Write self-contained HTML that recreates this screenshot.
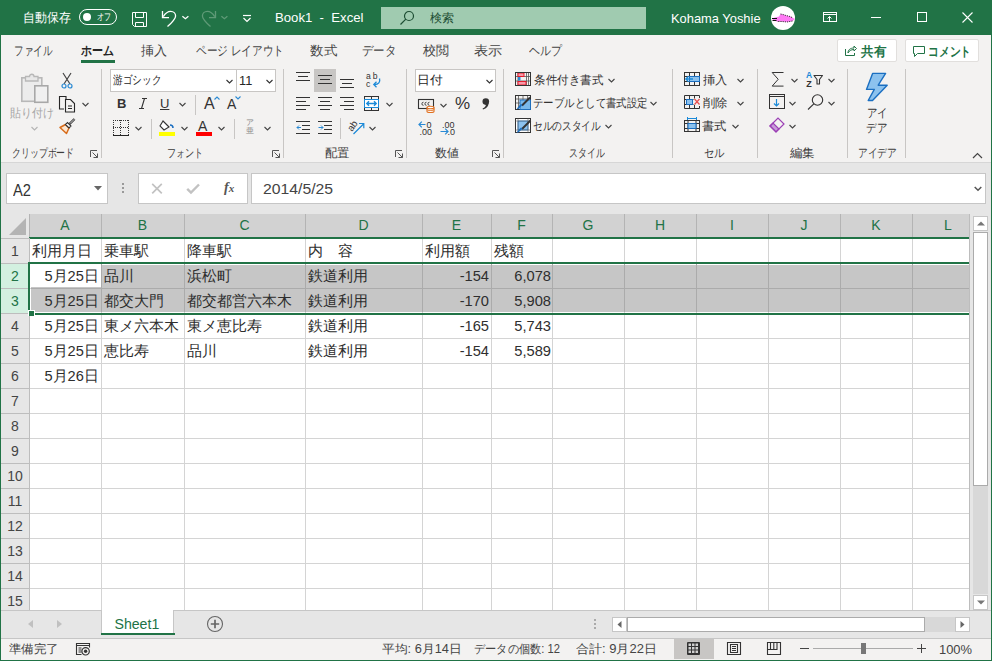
<!DOCTYPE html>
<html lang="ja"><head><meta charset="utf-8">
<style>
*{margin:0;padding:0;box-sizing:border-box}
html,body{width:992px;height:661px;overflow:hidden;background:#f3f2f1;font-family:"Liberation Sans",sans-serif;color:#262626}
.a{position:absolute}
.t{position:absolute;white-space:nowrap}
svg{overflow:visible}
</style></head><body>
<div class="a" style="left:0px;top:0px;width:992px;height:35px;background:#217346;"></div>
<div id="autosave" class="t" style="left:23.16px;top:10px;font-size:12.5px;line-height:16px;color:#fff;transform:scaleX(0.9192);transform-origin:0 0;">自動保存</div>
<div class="a" style="left:79px;top:9px;width:38px;height:16px;background:transparent;border:1px solid #fff;border-radius:8px;box-sizing:border-box"></div>
<div class="a" style="left:83px;top:13px;width:8px;height:8px;background:#fff;border-radius:50%"></div>
<div id="ofu" class="t" style="left:97.3px;top:11px;font-size:10px;line-height:12px;color:#fff;transform:scaleX(0.7075);transform-origin:0 0;">オフ</div>
<svg class="a" style="left:131px;top:11px" width="17" height="17" viewBox="0 0 17 17"><g fill="none" stroke="#fff" stroke-width="1"><path d="M1.5 1.5h14v14h-12l-2-2z"/><path d="M4.5 1.5v5h8v-5"/><path d="M4.5 15.5v-4h8v4"/></g></svg>
<svg class="a" style="left:160px;top:10px" width="18" height="18" viewBox="0 0 18 18"><g fill="none" stroke="#fff" stroke-width="1.3"><path d="M2.5 1V7.6H9"/><path d="M3.3 6.6C5.5 3 8.5 1.4 10.7 1.4 13.5 1.4 15.6 3.5 15.6 5.9 15.6 8.5 13 11.5 7.5 16.6"/></g></svg>
<svg class="a" style="left:181px;top:14px" width="9" height="6" viewBox="0 0 9 6"><path d="M1.4 2.3l3 2.4 3-2.4" fill="none" stroke="#fff" stroke-width="1.3"/></svg>
<svg class="a" style="left:200px;top:10px" width="18" height="18" viewBox="0 0 18 18"><g fill="none" stroke="#5f9a77" stroke-width="1.3"><path d="M15.5 1V7.6H9"/><path d="M14.7 6.6C12.5 3 9.5 1.4 7.3 1.4 4.5 1.4 2.4 3.5 2.4 5.9 2.4 8.5 5 11.5 10.5 16.6"/></g></svg>
<svg class="a" style="left:220px;top:14px" width="9" height="6" viewBox="0 0 9 6"><path d="M1.4 2.3l3 2.4 3-2.4" fill="none" stroke="#5f9a77" stroke-width="1.3"/></svg>
<svg class="a" style="left:242px;top:14px" width="10" height="9" viewBox="0 0 10 9"><g fill="none" stroke="#fff" stroke-width="1.2"><path d="M1 1.5h8"/><path d="M1.5 4l3.5 3.5L8.5 4"/></g></svg>
<div id="book" class="t" style="left:274.99px;top:10px;font-size:13px;line-height:16px;color:#fff;transform:scaleX(1.0116);transform-origin:0 0;">Book1&nbsp;&nbsp;-&nbsp;&nbsp;Excel</div>
<div class="a" style="left:381px;top:7px;width:265px;height:22px;background:#a0cbb0;"></div>
<svg class="a" style="left:399px;top:10px" width="16" height="16" viewBox="0 0 16 16"><g fill="none" stroke="#1d4e33" stroke-width="1.2"><circle cx="10" cy="6" r="4.5"/><path d="M6.8 9.2L1.5 14.5"/></g></svg>
<div id="kensaku" class="t" style="left:430.0px;top:11px;font-size:12px;line-height:15px;color:#1d4e33;transform:scaleX(1.001);transform-origin:0 0;">検索</div>
<div id="user" class="t" style="left:670.62px;top:11px;font-size:13px;line-height:16px;color:#fff;transform:scaleX(0.9911);transform-origin:0 0;">Kohama Yoshie</div>
<div class="a" style="left:771px;top:6px;width:24px;height:24px;background:#fff;border-radius:50%"></div>
<svg class="a" style="left:771px;top:12px" width="25" height="12" viewBox="0 0 25 12"><path d="M1.5 6.5L4 5.5 8 4.5 9.5 2 12 2.5 15 3.5 19 4.5 22 6 24 7 21.5 9 16 10 11 9.5 6 9.5 2 8.5z" fill="#ff7af5"/><path d="M9.5 2L12 2.5 15 3.5 19 4.5 22 6M21.5 9L16 10 11 9.5 6 9.5" fill="none" stroke="#222" stroke-width="0.9" stroke-dasharray="1.2 1"/><path d="M1 6.5h5M1.5 8.5h4" stroke="#111" stroke-width="1"/></svg>
<svg class="a" style="left:823px;top:12px" width="14" height="10" viewBox="0 0 14 10"><g fill="none" stroke="#fff" stroke-width="1"><rect x="0.5" y="0.5" width="13" height="9"/><path d="M0.5 2.5h13"/><path d="M6.5 9.5V4.5M4.5 6.5l2-2 2 2"/></g></svg>
<div class="a" style="left:871px;top:17px;width:10px;height:1px;background:#fff;"></div>
<div class="a" style="left:917px;top:12px;width:10px;height:10px;background:transparent;border:1px solid #fff"></div>
<svg class="a" style="left:962px;top:12px" width="11" height="11" viewBox="0 0 11 11"><path d="M0.5 0.5l10 10M10.5 0.5l-10 10" stroke="#fff" stroke-width="1.1"/></svg>
<div class="a" style="left:1px;top:35px;width:990px;height:127px;background:#f3f2f1;"></div>
<div id="tab_file" class="t" style="left:13.92px;top:43px;font-size:13px;line-height:16px;color:#444;transform:scaleX(0.74);transform-origin:0 0;">ファイル</div>
<div id="tab_ins" class="t" style="left:141.0px;top:43px;font-size:13px;line-height:16px;color:#444;">挿入</div>
<div id="tab_page" class="t" style="left:196.18px;top:43px;font-size:13px;line-height:16px;color:#444;transform:scaleX(0.8173);transform-origin:0 0;">ページ レイアウト</div>
<div id="tab_f" class="t" style="left:309.96px;top:43px;font-size:13px;line-height:16px;color:#444;transform:scaleX(1.04);transform-origin:0 0;">数式</div>
<div id="tab_data" class="t" style="left:362.12px;top:43px;font-size:13px;line-height:16px;color:#444;transform:scaleX(0.8836);transform-origin:0 0;">データ</div>
<div id="tab_rev" class="t" style="left:423.0px;top:43px;font-size:13px;line-height:16px;color:#444;transform:scaleX(1.003);transform-origin:0 0;">校閲</div>
<div id="tab_view" class="t" style="left:474.3px;top:43px;font-size:13px;line-height:16px;color:#444;transform:scaleX(1.0848);transform-origin:0 0;">表示</div>
<div id="tab_help" class="t" style="left:529.23px;top:43px;font-size:13px;line-height:16px;color:#444;transform:scaleX(0.8421);transform-origin:0 0;">ヘルプ</div>
<div id="tab_home" class="t" style="left:81.0px;top:43px;font-size:13px;line-height:16px;color:#262626;transform:scaleX(0.8436);transform-origin:0 0;font-weight:bold">ホーム</div>
<div class="a" style="left:81px;top:60px;width:34px;height:3px;background:#217346;"></div>
<div class="a" style="left:837px;top:39px;width:60px;height:23px;background:#fff;border:1px solid #e1dfdd;border-radius:2px"></div>
<svg class="a" style="left:845px;top:45px" width="12" height="11" viewBox="0 0 12 11"><g fill="none" stroke="#217346" stroke-width="1"><path d="M0.5 4v6.5h9V8"/><path d="M3 8c0-3 2-5 6-5V1l2.5 2.5L9 6V4.5c-3 0-5 1.5-6 3.5z"/></g></svg>
<div id="share" class="t" style="left:861.0px;top:44px;font-size:12.5px;line-height:16px;color:#217346;transform:scaleX(0.9631);transform-origin:0 0;font-weight:bold">共有</div>
<div class="a" style="left:905px;top:39px;width:74px;height:23px;background:#fff;border:1px solid #e1dfdd;border-radius:2px"></div>
<svg class="a" style="left:913px;top:46px" width="12" height="11" viewBox="0 0 12 11"><path d="M0.5 0.5h11v7h-7l-3 3v-3h-1z" fill="none" stroke="#217346"/></svg>
<div id="comment" class="t" style="left:928.32px;top:44px;font-size:12.5px;line-height:16px;color:#217346;transform:scaleX(0.8303);transform-origin:0 0;font-weight:bold">コメント</div>
<svg class="a" style="left:20px;top:72px" width="30" height="32" viewBox="0 0 30 32"><rect x="1.8" y="5.8" width="20" height="23.5" fill="#ececec" stroke="#b8b8b8" stroke-width="1.6"/><path d="M5.5 9V4.5H9.5C9.5 1.5 14 1.5 14 4.5H18V9z" fill="#e8e8e8" stroke="#b8b8b8" stroke-width="1.3"/><rect x="14.8" y="13.8" width="13" height="16.5" fill="#f0f0f0" stroke="#a8a8a8" stroke-width="1.6"/></svg>
<div id="paste" class="t" style="left:10.07px;top:106px;font-size:12px;line-height:15px;color:#a6a6a6;transform:scaleX(0.9157);transform-origin:0 0;">貼り付け</div>
<svg class="a" style="left:31px;top:126px" width="7" height="5" viewBox="0 0 7 5"><path d="M0.5 1l3 3 3-3" fill="none" stroke="#b4b4b4" stroke-width="1.1"/></svg>
<svg class="a" style="left:61px;top:72px" width="12" height="17" viewBox="0 0 12 17"><g fill="none" stroke-width="1.2"><path d="M2 1l7 11M10 1L3 12" stroke="#444"/><circle cx="3" cy="14" r="2" stroke="#2a8ad4"/><circle cx="9" cy="14" r="2" stroke="#2a8ad4"/></g></svg>
<svg class="a" style="left:59px;top:96px" width="18" height="17" viewBox="0 0 18 17"><g fill="none" stroke="#262626" stroke-width="1.1"><path d="M7 3.5V0.5H0.5v12.5H5"/><path d="M6.5 3.5h5l4 4v8.5h-9z"/><path d="M9 10h4M9 12.5h4"/></g></svg>
<svg class="a" style="left:82px;top:102px" width="7" height="5" viewBox="0 0 7 5"><path d="M0.5 1l3 3 3-3" fill="none" stroke="#444" stroke-width="1.1"/></svg>
<svg class="a" style="left:59px;top:117px" width="17" height="17" viewBox="0 0 17 17"><path d="M1 10.5L6.5 7.5 10 11 7.5 16.5z" fill="#fde6cf" stroke="#d86c1a" stroke-width="1.5" stroke-linejoin="round"/><path d="M6.5 7.5L10 11 12 9 8.5 5.5z" fill="#fff" stroke="#333" stroke-width="1.1"/><path d="M10.5 7L15.5 2" stroke="#333" stroke-width="2.4"/><path d="M11 6.5L15.3 2.2" stroke="#fff" stroke-width="0.8"/></svg>
<div id="lbl_clip" class="t" style="left:11.52px;top:146px;font-size:12px;line-height:15px;color:#3c3c3c;transform:scaleX(0.74);transform-origin:0 0;">クリップボード</div>
<svg class="a" style="left:90px;top:150px" width="8" height="8" viewBox="0 0 8 8"><path d="M0.5 7V0.5H7" fill="none" stroke="#555"/><path d="M2.5 2.5l5 5M7.5 3.5v4h-4" fill="none" stroke="#555"/></svg>
<div class="a" style="left:101px;top:69px;width:1px;height:89px;background:#c8c6c4;"></div>
<div class="a" style="left:110px;top:69px;width:127px;height:23px;background:#fff;border:1px solid #c8c6c4"></div>
<div id="fontname" class="t" style="left:113.0px;top:73px;font-size:12px;line-height:15px;color:#262626;transform:scaleX(0.8036);transform-origin:0 0;">游ゴシック</div>
<svg class="a" style="left:226px;top:79px" width="7" height="5" viewBox="0 0 7 5"><path d="M0.5 1l3 3 3-3" fill="none" stroke="#333" stroke-width="1.1"/></svg>
<div class="a" style="left:236px;top:69px;width:40px;height:23px;background:#fff;border:1px solid #c8c6c4"></div>
<div id="fontsize" class="t" style="left:238.97px;top:73px;font-size:12.5px;line-height:16px;color:#262626;transform:scaleX(1.0189);transform-origin:0 0;">11</div>
<svg class="a" style="left:266px;top:79px" width="7" height="5" viewBox="0 0 7 5"><path d="M0.5 1l3 3 3-3" fill="none" stroke="#333" stroke-width="1.1"/></svg>
<div id="bold" class="t" style="left:117px;top:96px;font-size:13px;line-height:16px;color:#333;font-weight:bold">B</div>
<svg class="a" style="left:139px;top:98px" width="8" height="11" viewBox="0 0 8 11"><path d="M3 0.5h5M0 10.5h5M5.5 0.5L2.5 10.5" fill="none" stroke="#333" stroke-width="1.1"/></svg>
<div id="under" class="t" style="left:160px;top:96px;font-size:13px;line-height:16px;color:#333;text-decoration:underline">U</div>
<svg class="a" style="left:179px;top:102px" width="7" height="5" viewBox="0 0 7 5"><path d="M0.5 1l3 3 3-3" fill="none" stroke="#444" stroke-width="1.1"/></svg>
<div class="a" style="left:195px;top:95px;width:1px;height:20px;background:#c8c6c4;"></div>
<div id="growA" class="t" style="left:204px;top:94px;font-size:16px;line-height:20px;color:#333;">A</div>
<svg class="a" style="left:214px;top:96px" width="6" height="4" viewBox="0 0 6 4"><path d="M0.5 3.5l2.5-2.5 2.5 2.5" fill="none" stroke="#2a8ad4" stroke-width="1.1"/></svg>
<div id="shrinkA" class="t" style="left:227px;top:95px;font-size:14px;line-height:18px;color:#333;">A</div>
<svg class="a" style="left:235px;top:96px" width="6" height="4" viewBox="0 0 6 4"><path d="M0.5 0.5l2.5 2.5 2.5-2.5" fill="none" stroke="#2a8ad4" stroke-width="1.1"/></svg>
<svg class="a" style="left:113px;top:120px" width="16" height="16" viewBox="0 0 16 16"><g fill="#333"><rect x="0" y="0" width="1" height="1"/><rect x="0" y="7" width="1" height="1"/><rect x="0" y="0" width="1" height="1"/><rect x="15" y="0" width="1" height="1"/><rect x="7" y="0" width="1" height="1"/><rect x="2" y="0" width="1" height="1"/><rect x="2" y="7" width="1" height="1"/><rect x="0" y="2" width="1" height="1"/><rect x="15" y="2" width="1" height="1"/><rect x="7" y="2" width="1" height="1"/><rect x="4" y="0" width="1" height="1"/><rect x="4" y="7" width="1" height="1"/><rect x="0" y="4" width="1" height="1"/><rect x="15" y="4" width="1" height="1"/><rect x="7" y="4" width="1" height="1"/><rect x="6" y="0" width="1" height="1"/><rect x="6" y="7" width="1" height="1"/><rect x="0" y="6" width="1" height="1"/><rect x="15" y="6" width="1" height="1"/><rect x="7" y="6" width="1" height="1"/><rect x="8" y="0" width="1" height="1"/><rect x="8" y="7" width="1" height="1"/><rect x="0" y="8" width="1" height="1"/><rect x="15" y="8" width="1" height="1"/><rect x="7" y="8" width="1" height="1"/><rect x="10" y="0" width="1" height="1"/><rect x="10" y="7" width="1" height="1"/><rect x="0" y="10" width="1" height="1"/><rect x="15" y="10" width="1" height="1"/><rect x="7" y="10" width="1" height="1"/><rect x="12" y="0" width="1" height="1"/><rect x="12" y="7" width="1" height="1"/><rect x="0" y="12" width="1" height="1"/><rect x="15" y="12" width="1" height="1"/><rect x="7" y="12" width="1" height="1"/><rect x="14" y="0" width="1" height="1"/><rect x="14" y="7" width="1" height="1"/><rect x="0" y="14" width="1" height="1"/><rect x="15" y="14" width="1" height="1"/><rect x="7" y="14" width="1" height="1"/></g><path d="M0 15.5h16" stroke="#222"/></svg>
<svg class="a" style="left:135px;top:126px" width="7" height="5" viewBox="0 0 7 5"><path d="M0.5 1l3 3 3-3" fill="none" stroke="#444" stroke-width="1.1"/></svg>
<div class="a" style="left:151px;top:119px;width:1px;height:20px;background:#c8c6c4;"></div>
<svg class="a" style="left:159px;top:119px" width="16" height="17" viewBox="0 0 16 17"><path d="M4 2l-3 5 4 4 5-3z" stroke="#333" stroke-width="1.1" fill="#fff"/><path d="M11 6c1.5 0 3 1 3 3" fill="none" stroke="#1b6fc1" stroke-width="1.5"/><rect x="0" y="13" width="16" height="4" fill="#ffff00"/></svg>
<svg class="a" style="left:181px;top:126px" width="7" height="5" viewBox="0 0 7 5"><path d="M0.5 1l3 3 3-3" fill="none" stroke="#444" stroke-width="1.1"/></svg>
<div id="fcolA" class="t" style="left:198px;top:117px;font-size:14px;line-height:18px;color:#333;">A</div>
<div class="a" style="left:196px;top:132px;width:16px;height:4px;background:#f00;"></div>
<svg class="a" style="left:218px;top:126px" width="7" height="5" viewBox="0 0 7 5"><path d="M0.5 1l3 3 3-3" fill="none" stroke="#444" stroke-width="1.1"/></svg>
<div class="a" style="left:234px;top:119px;width:1px;height:20px;background:#c8c6c4;"></div>
<div id="phon" class="t" style="left:246px;top:119px;font-size:8px;line-height:8px;color:#888;">ア<br>亜</div>
<svg class="a" style="left:264px;top:126px" width="7" height="5" viewBox="0 0 7 5"><path d="M0.5 1l3 3 3-3" fill="none" stroke="#444" stroke-width="1.1"/></svg>
<div id="lbl_font" class="t" style="left:167.25px;top:146px;font-size:12px;line-height:15px;color:#3c3c3c;transform:scaleX(0.7592);transform-origin:0 0;">フォント</div>
<svg class="a" style="left:272px;top:150px" width="8" height="8" viewBox="0 0 8 8"><path d="M0.5 7V0.5H7" fill="none" stroke="#555"/><path d="M2.5 2.5l5 5M7.5 3.5v4h-4" fill="none" stroke="#555"/></svg>
<div class="a" style="left:283px;top:69px;width:1px;height:89px;background:#c8c6c4;"></div>
<div class="a" style="left:296px;top:72px;width:14px;height:1px;background:#333;"></div>
<div class="a" style="left:298px;top:76px;width:10px;height:1px;background:#333;"></div>
<div class="a" style="left:296px;top:80px;width:14px;height:1px;background:#333;"></div>
<div class="a" style="left:314px;top:69px;width:22px;height:23px;background:#c8c6c4;"></div>
<div class="a" style="left:318px;top:75px;width:14px;height:1px;background:#333;"></div>
<div class="a" style="left:320px;top:79px;width:10px;height:1px;background:#333;"></div>
<div class="a" style="left:318px;top:83px;width:14px;height:1px;background:#333;"></div>
<div class="a" style="left:340px;top:79px;width:14px;height:1px;background:#333;"></div>
<div class="a" style="left:342px;top:83px;width:10px;height:1px;background:#333;"></div>
<div class="a" style="left:340px;top:87px;width:14px;height:1px;background:#333;"></div>
<svg class="a" style="left:366px;top:72px" width="16" height="16" viewBox="0 0 16 16"><text x="0" y="7.3" font-size="8.6" font-family="Liberation Sans" fill="#333" textLength="11.5">ab</text><text x="0" y="14.6" font-size="8.6" font-family="Liberation Sans" fill="#333">c</text><path d="M13.5 6.5C14.5 10 12.5 12.5 8.5 12.5" fill="none" stroke="#1b8ad8" stroke-width="1.3"/><path d="M10.5 9.8L7.8 12.5l2.7 2.7" fill="none" stroke="#1b8ad8" stroke-width="1.3"/></svg>
<div class="a" style="left:296px;top:97px;width:14px;height:1px;background:#333;"></div>
<div class="a" style="left:296px;top:101px;width:10px;height:1px;background:#333;"></div>
<div class="a" style="left:296px;top:105px;width:14px;height:1px;background:#333;"></div>
<div class="a" style="left:296px;top:109px;width:10px;height:1px;background:#333;"></div>
<div class="a" style="left:318px;top:97px;width:14px;height:1px;background:#333;"></div>
<div class="a" style="left:320px;top:101px;width:10px;height:1px;background:#333;"></div>
<div class="a" style="left:318px;top:105px;width:14px;height:1px;background:#333;"></div>
<div class="a" style="left:320px;top:109px;width:10px;height:1px;background:#333;"></div>
<div class="a" style="left:340px;top:97px;width:14px;height:1px;background:#333;"></div>
<div class="a" style="left:344px;top:101px;width:10px;height:1px;background:#333;"></div>
<div class="a" style="left:340px;top:105px;width:14px;height:1px;background:#333;"></div>
<div class="a" style="left:344px;top:109px;width:10px;height:1px;background:#333;"></div>
<svg class="a" style="left:364px;top:96px" width="16" height="15" viewBox="0 0 16 15"><rect x="0.5" y="0.5" width="14" height="14" fill="none" stroke="#333"/><path d="M7.5 0.5v3M7.5 11.5v3" stroke="#333"/><rect x="0.5" y="3.5" width="14" height="8" fill="#fff" stroke="#1b8ad8"/><path d="M3 7.5h9M5 5.3L2.8 7.5 5 9.7M10 5.3l2.2 2.2L10 9.7" fill="none" stroke="#1b8ad8" stroke-width="1.4"/></svg>
<svg class="a" style="left:386px;top:102px" width="7" height="5" viewBox="0 0 7 5"><path d="M0.5 1l3 3 3-3" fill="none" stroke="#444" stroke-width="1.1"/></svg>
<svg class="a" style="left:296px;top:121px" width="14" height="13" viewBox="0 0 14 13"><g fill="none" stroke="#333"><path d="M0 0.5h14M6 4.5h8M6 8.5h8M0 12.5h14"/><path d="M5 6.5H1M3 4.5l-2 2 2 2" stroke="#2a8ad4"/></g></svg>
<svg class="a" style="left:318px;top:121px" width="14" height="13" viewBox="0 0 14 13"><g fill="none" stroke="#333"><path d="M0 0.5h14M6 4.5h8M6 8.5h8M0 12.5h14"/><path d="M0.5 6.5H5M3 4.5l2 2-2 2" stroke="#2a8ad4"/></g></svg>
<div class="a" style="left:340px;top:118px;width:1px;height:21px;background:#c8c6c4;"></div>
<svg class="a" style="left:348px;top:119px" width="17" height="16" viewBox="0 0 17 16"><text x="-1" y="10.5" font-size="9.5" font-family="Liberation Sans" fill="#333" transform="rotate(-55 4 7)">ab</text><path d="M5.5 15L15.5 5M11 4.5h4.8v4.8" fill="none" stroke="#1b8ad8" stroke-width="1.2"/></svg>
<svg class="a" style="left:369px;top:126px" width="7" height="5" viewBox="0 0 7 5"><path d="M0.5 1l3 3 3-3" fill="none" stroke="#444" stroke-width="1.1"/></svg>
<div id="lbl_align" class="t" style="left:324.56px;top:146px;font-size:12px;line-height:15px;color:#3c3c3c;transform:scaleX(1.0286);transform-origin:0 0;">配置</div>
<svg class="a" style="left:395px;top:150px" width="8" height="8" viewBox="0 0 8 8"><path d="M0.5 7V0.5H7" fill="none" stroke="#555"/><path d="M2.5 2.5l5 5M7.5 3.5v4h-4" fill="none" stroke="#555"/></svg>
<div class="a" style="left:406px;top:69px;width:1px;height:89px;background:#c8c6c4;"></div>
<div class="a" style="left:415px;top:69px;width:81px;height:23px;background:#fff;border:1px solid #c8c6c4"></div>
<div id="numfmt" class="t" style="left:416.87px;top:73px;font-size:12px;line-height:15px;color:#262626;transform:scaleX(1.0674);transform-origin:0 0;">日付</div>
<svg class="a" style="left:486px;top:79px" width="7" height="5" viewBox="0 0 7 5"><path d="M0.5 1l3 3 3-3" fill="none" stroke="#333" stroke-width="1.1"/></svg>
<svg class="a" style="left:418px;top:99px" width="17" height="14" viewBox="0 0 17 14"><rect x="0.5" y="0.5" width="15" height="9" fill="none" stroke="#333" stroke-width="1.1"/><path d="M5.5 3.2a1.6 1.6 0 1 0 0 3.2M8.5 3.2a1.6 1.6 0 1 0 0 3.2M11.5 3.2a1.6 1.6 0 1 0 0 3.2" fill="none" stroke="#333" stroke-width="0.9"/><path d="M9 8.5v4c0 1.3 7 1.3 7 0v-4" fill="#fff" stroke="#e07020" stroke-width="1.1"/><ellipse cx="12.5" cy="8.5" rx="3.5" ry="1.3" fill="#fff" stroke="#e07020" stroke-width="1.1"/><path d="M9 10.5c0 1.3 7 1.3 7 0" fill="none" stroke="#e07020"/></svg>
<svg class="a" style="left:440px;top:103px" width="7" height="5" viewBox="0 0 7 5"><path d="M0.5 1l3 3 3-3" fill="none" stroke="#444" stroke-width="1.1"/></svg>
<div id="pct" class="t" style="left:455px;top:95px;font-size:17px;line-height:17px;color:#333;">%</div>
<svg class="a" style="left:481px;top:98px" width="9" height="12" viewBox="0 0 9 12"><circle cx="4.8" cy="3.6" r="3.3" fill="#333"/><path d="M7.6 4.5C7.8 8 5.5 10.5 2 11.5L1.6 10.6C3.8 9.5 5 8 5 6z" fill="#333"/></svg>
<svg class="a" style="left:418px;top:120px" width="16" height="15" viewBox="0 0 16 15"><path d="M7.5 4.5H1M3.8 1.7L1 4.5l2.8 2.8" fill="none" stroke="#2a8ad4" stroke-width="1.2"/><text x="8.5" y="7.6" font-size="9" font-family="Liberation Sans" fill="#333">0</text><text x="1.5" y="14.6" font-size="9" font-family="Liberation Sans" fill="#333">.00</text></svg>
<svg class="a" style="left:440px;top:120px" width="16" height="15" viewBox="0 0 16 15"><text x="2" y="7.6" font-size="9" font-family="Liberation Sans" fill="#333">.00</text><path d="M0.5 11.5H8M5.2 8.7L8 11.5l-2.8 2.8" fill="none" stroke="#2a8ad4" stroke-width="1.2"/><text x="7.5" y="14.6" font-size="9" font-family="Liberation Sans" fill="#333">.0</text></svg>
<div id="lbl_num" class="t" style="left:435.0px;top:146px;font-size:12px;line-height:15px;color:#3c3c3c;transform:scaleX(1.0036);transform-origin:0 0;">数値</div>
<svg class="a" style="left:492px;top:150px" width="8" height="8" viewBox="0 0 8 8"><path d="M0.5 7V0.5H7" fill="none" stroke="#555"/><path d="M2.5 2.5l5 5M7.5 3.5v4h-4" fill="none" stroke="#555"/></svg>
<div class="a" style="left:503px;top:69px;width:1px;height:89px;background:#c8c6c4;"></div>
<svg class="a" style="left:515px;top:72px" width="16" height="14" viewBox="0 0 16 14"><path d="M0.5 4.5h15M0.5 9h15M3 0.5v13M11.5 0.5v13M13.5 0.5v13" stroke="#555" stroke-width="0.8"/><rect x="3" y="1" width="6" height="3.5" fill="#f69aa8" stroke="#e81123" stroke-width="0.9"/><rect x="3" y="5" width="2.5" height="3.5" fill="#2a8ad4"/><rect x="3" y="9.5" width="8" height="3.5" fill="#f69aa8" stroke="#e81123" stroke-width="0.9"/><rect x="0.5" y="0.5" width="15" height="13" fill="none" stroke="#333"/></svg>
<div id="cond" class="t" style="left:534.0px;top:73px;font-size:12px;line-height:15px;color:#333;transform:scaleX(0.9585);transform-origin:0 0;">条件付き書式</div>
<svg class="a" style="left:608px;top:78px" width="7" height="5" viewBox="0 0 7 5"><path d="M0.5 1l3 3 3-3" fill="none" stroke="#444" stroke-width="1.1"/></svg>
<svg class="a" style="left:515px;top:95px" width="16" height="15" viewBox="0 0 16 15"><path d="M0.5 4h15M0.5 8h15M3.5 0.5v14M8 0.5v14M12.5 0.5v14" stroke="#555" stroke-width="0.8"/><rect x="0.5" y="0.5" width="15" height="14" fill="none" stroke="#333"/><rect x="5" y="5" width="10.5" height="9.5" fill="#79b8ea" stroke="#1b6fc1" stroke-width="0.9"/><path d="M15 2.5L7 10.5" stroke="#333" stroke-width="2"/><path d="M7.5 10L5 12.5C4 13.5 3 14 1.5 14.5 3 12 4 11 6 9z" fill="#1b6fc1"/></svg>
<div id="tblfmt" class="t" style="left:533.13px;top:96px;font-size:12px;line-height:15px;color:#333;transform:scaleX(0.8693);transform-origin:0 0;">テーブルとして書式設定</div>
<svg class="a" style="left:650px;top:101px" width="7" height="5" viewBox="0 0 7 5"><path d="M0.5 1l3 3 3-3" fill="none" stroke="#444" stroke-width="1.1"/></svg>
<svg class="a" style="left:515px;top:118px" width="16" height="15" viewBox="0 0 16 15"><rect x="0.5" y="0.5" width="15" height="14" fill="#fff" stroke="#333"/><rect x="3" y="3" width="10" height="9" fill="#8cc2ee" stroke="#1b6fc1" stroke-width="0.8"/><path d="M0.5 3h15M3 0.5v14M13 0.5v14M0.5 12h15" stroke="#666" stroke-width="0.6"/><path d="M15.5 2.5L7 11" stroke="#333" stroke-width="2"/><path d="M7.5 10.5L5 13C4 14 3 14.5 1.5 15 3 12.5 4 11.5 6 9.5z" fill="#1b6fc1"/></svg>
<div id="cellsty" class="t" style="left:533.19px;top:119px;font-size:12px;line-height:15px;color:#333;transform:scaleX(0.8075);transform-origin:0 0;">セルのスタイル</div>
<svg class="a" style="left:605px;top:124px" width="7" height="5" viewBox="0 0 7 5"><path d="M0.5 1l3 3 3-3" fill="none" stroke="#444" stroke-width="1.1"/></svg>
<div id="lbl_style" class="t" style="left:569.26px;top:146px;font-size:12px;line-height:15px;color:#3c3c3c;transform:scaleX(0.7447);transform-origin:0 0;">スタイル</div>
<div class="a" style="left:672px;top:69px;width:1px;height:89px;background:#c8c6c4;"></div>
<svg class="a" style="left:684px;top:72px" width="16" height="14" viewBox="0 0 16 14"><g fill="none" stroke="#333"><rect x="0.5" y="0.5" width="15" height="13"/><path d="M0.5 4.5h15M0.5 9.5h15M5.5 0.5v13M10.5 0.5v13"/></g><rect x="5.5" y="4.5" width="10" height="5" fill="#8cc2ee" stroke="#1b6fc1"/><path d="M9 7H1.8M4.6 4.2L1.8 7l2.8 2.8" fill="none" stroke="#1b8ad8" stroke-width="1.3"/></svg>
<div id="ins" class="t" style="left:703.22px;top:73px;font-size:12px;line-height:15px;color:#333;transform:scaleX(1.0268);transform-origin:0 0;">挿入</div>
<svg class="a" style="left:737px;top:78px" width="7" height="5" viewBox="0 0 7 5"><path d="M0.5 1l3 3 3-3" fill="none" stroke="#444" stroke-width="1.1"/></svg>
<svg class="a" style="left:684px;top:95px" width="16" height="14" viewBox="0 0 16 14"><g fill="none" stroke="#333"><path d="M15.5 3V0.5H0.5v13h15V11"/><path d="M0.5 4.5h9M0.5 9.5h9M5.5 0.5v13M10.5 0.5v3M10.5 10v3.5"/></g><rect x="2.5" y="4.5" width="6" height="5" fill="#8cc2ee" stroke="#1b6fc1"/><path d="M10.5 4l5 5.5M15.5 4l-5 5.5" stroke="#e84c4c" stroke-width="1.2"/></svg>
<div id="del" class="t" style="left:703.22px;top:96px;font-size:12px;line-height:15px;color:#333;transform:scaleX(1.0268);transform-origin:0 0;">削除</div>
<svg class="a" style="left:737px;top:101px" width="7" height="5" viewBox="0 0 7 5"><path d="M0.5 1l3 3 3-3" fill="none" stroke="#444" stroke-width="1.1"/></svg>
<svg class="a" style="left:684px;top:117px" width="16" height="15" viewBox="0 0 16 15"><path d="M3.5 1.5h9M3.5 0v3M12.5 0v3" stroke="#1b8ad8" stroke-width="1"/><g fill="none" stroke="#333"><rect x="0.5" y="3.5" width="15" height="11"/><path d="M0.5 6.5h15M0.5 11.5h15M4 3.5v11M12 3.5v11"/></g><rect x="4" y="6.5" width="8" height="5" fill="#8cc2ee" stroke="#1b6fc1"/></svg>
<div id="fmt" class="t" style="left:702.18px;top:119px;font-size:12px;line-height:15px;color:#333;transform:scaleX(1.0268);transform-origin:0 0;">書式</div>
<svg class="a" style="left:732px;top:124px" width="7" height="5" viewBox="0 0 7 5"><path d="M0.5 1l3 3 3-3" fill="none" stroke="#444" stroke-width="1.1"/></svg>
<div id="lbl_cell" class="t" style="left:704.1px;top:146px;font-size:12px;line-height:15px;color:#3c3c3c;transform:scaleX(0.8638);transform-origin:0 0;">セル</div>
<div class="a" style="left:757px;top:69px;width:1px;height:89px;background:#c8c6c4;"></div>
<svg class="a" style="left:771px;top:72px" width="13" height="15" viewBox="0 0 13 15"><path d="M12.5 0.5H1.2l6 6.8-6 6.8h11.3" fill="none" stroke="#333" stroke-width="1"/></svg>
<svg class="a" style="left:791px;top:78px" width="7" height="5" viewBox="0 0 7 5"><path d="M0.5 1l3 3 3-3" fill="none" stroke="#444" stroke-width="1.1"/></svg>
<svg class="a" style="left:806px;top:71px" width="18" height="16" viewBox="0 0 18 16"><text x="0" y="7" font-size="8.5" font-weight="bold" font-family="Liberation Sans" fill="#1b8ad8">A</text><text x="0.3" y="15.8" font-size="9" font-weight="bold" font-family="Liberation Sans" fill="#333">Z</text><path d="M8 4.5h8.5l-3 4v4.5h-2.5V8.5z" fill="none" stroke="#333" stroke-width="1.1" stroke-linejoin="round"/></svg>
<svg class="a" style="left:828px;top:78px" width="7" height="5" viewBox="0 0 7 5"><path d="M0.5 1l3 3 3-3" fill="none" stroke="#444" stroke-width="1.1"/></svg>
<svg class="a" style="left:769px;top:94px" width="16" height="15" viewBox="0 0 16 15"><rect x="0.5" y="0.5" width="15" height="14" fill="none" stroke="#333"/><path d="M0.5 2.5h15" stroke="#333"/><path d="M7.5 5v7M5 9.5l2.5 2.5 2.5-2.5" fill="none" stroke="#1b8ad8" stroke-width="1.2"/></svg>
<svg class="a" style="left:789px;top:101px" width="7" height="5" viewBox="0 0 7 5"><path d="M0.5 1l3 3 3-3" fill="none" stroke="#444" stroke-width="1.1"/></svg>
<svg class="a" style="left:807px;top:94px" width="17" height="16" viewBox="0 0 17 16"><g fill="none" stroke="#333" stroke-width="1.1"><circle cx="10.5" cy="6" r="5.2"/><path d="M6.8 9.8L1 15.5"/></g></svg>
<svg class="a" style="left:828px;top:101px" width="7" height="5" viewBox="0 0 7 5"><path d="M0.5 1l3 3 3-3" fill="none" stroke="#444" stroke-width="1.1"/></svg>
<svg class="a" style="left:769px;top:117px" width="16" height="16" viewBox="0 0 16 16"><g stroke="#9b3fb5" stroke-width="1.2"><path d="M1 9l3-3 6 6-3 3z" fill="#c79ad9"/><path d="M1 9l8-8 6 6-8 8z" fill="none"/></g></svg>
<svg class="a" style="left:789px;top:124px" width="7" height="5" viewBox="0 0 7 5"><path d="M0.5 1l3 3 3-3" fill="none" stroke="#444" stroke-width="1.1"/></svg>
<div id="lbl_edit" class="t" style="left:790.0px;top:146px;font-size:12px;line-height:15px;color:#3c3c3c;transform:scaleX(1.0373);transform-origin:0 0;">編集</div>
<div class="a" style="left:847px;top:69px;width:1px;height:89px;background:#c8c6c4;"></div>
<svg class="a" style="left:865px;top:72px" width="24" height="30" viewBox="0 0 24 30"><path d="M7.6 1.4H20.6L13.2 13.2H22.2L7.5 28.5H3.2L9.3 17.4H1.5z" fill="#8cc2ee" stroke="#1b6fc1" stroke-width="1.4" stroke-linejoin="round"/></svg>
<div id="idea1" class="t" style="left:867.09px;top:106px;font-size:12px;line-height:15px;color:#333;transform:scaleX(0.8705);transform-origin:0 0;">アイ</div>
<div id="idea2" class="t" style="left:866.12px;top:121px;font-size:12px;line-height:15px;color:#333;transform:scaleX(0.8759);transform-origin:0 0;">デア</div>
<div id="lbl_idea" class="t" style="left:857.81px;top:146px;font-size:12px;line-height:15px;color:#3c3c3c;transform:scaleX(0.809);transform-origin:0 0;">アイデア</div>
<div class="a" style="left:905px;top:69px;width:1px;height:89px;background:#c8c6c4;"></div>
<svg class="a" style="left:972px;top:152px" width="11" height="7" viewBox="0 0 11 7"><path d="M1 6l4.5-4.5L10 6" fill="none" stroke="#444" stroke-width="1.2"/></svg>
<div class="a" style="left:1px;top:162px;width:990px;height:1px;background:#d6d6d6;"></div>
<div class="a" style="left:1px;top:163px;width:990px;height:51px;background:#e6e6e6;"></div>
<div class="a" style="left:6px;top:173px;width:102px;height:31px;background:#fff;border:1px solid #c6c6c6"></div>
<div id="namebox" class="t" style="left:13.48px;top:181px;font-size:16px;line-height:19px;color:#333;transform:scaleX(0.9185);transform-origin:0 0;">A2</div>
<svg class="a" style="left:94px;top:186px" width="8" height="5" viewBox="0 0 8 5"><path d="M0 0h8L4 4.5z" fill="#666"/></svg>
<div class="a" style="left:122px;top:183px;width:2px;height:2px;background:#999;"></div>
<div class="a" style="left:122px;top:187px;width:2px;height:2px;background:#999;"></div>
<div class="a" style="left:122px;top:191px;width:2px;height:2px;background:#999;"></div>
<div class="a" style="left:138px;top:173px;width:110px;height:31px;background:#fff;border:1px solid #c6c6c6"></div>
<svg class="a" style="left:151px;top:183px" width="12" height="11" viewBox="0 0 12 11"><path d="M1.2 0.8l9.6 9.6M10.8 0.8l-9.6 9.6" stroke="#c2c2c2" stroke-width="1.7"/></svg>
<svg class="a" style="left:186px;top:183px" width="14" height="11" viewBox="0 0 14 11"><path d="M1.2 5.8l3.8 3.8L13 1.5" fill="none" stroke="#c2c2c2" stroke-width="2.4"/></svg>
<div id="fx" class="t" style="left:224px;top:179px;font-size:14px;line-height:18px;color:#555;font-style:italic;font-weight:bold;font-family:'Liberation Serif',serif">f<span style="font-size:11px">x</span></div>
<div class="a" style="left:251px;top:173px;width:735px;height:31px;background:#fff;border:1px solid #c6c6c6"></div>
<div id="formula" class="t" style="left:263.34px;top:180px;font-size:14.67px;line-height:18px;color:#444;transform:scaleX(1.075);transform-origin:0 0;">2014/5/25</div>
<svg class="a" style="left:974px;top:186px" width="8" height="6" viewBox="0 0 8 6"><path d="M0.7 1l3.3 3.3L7.3 1" fill="none" stroke="#555" stroke-width="1.5"/></svg>
<div class="a" style="left:1px;top:214px;width:969px;height:397px;background:#fff;"></div>
<div class="a" style="left:1px;top:214px;width:28px;height:24px;background:#e6e6e6;"></div>
<svg class="a" style="left:9px;top:218px" width="17" height="17" viewBox="0 0 17 17"><path d="M17 0v17H0z" fill="#b4b4b4"/></svg>
<div class="a" style="left:29px;top:214px;width:941px;height:23px;background:#d2d2d2;"></div>
<div id="col_A" class="t" style="left:29px;top:214px;font-size:14px;line-height:23px;color:#217346;width:72px;text-align:center">A</div>
<div class="a" style="left:101px;top:214px;width:1px;height:23px;background:#b4b4b4;"></div>
<div id="col_B" class="t" style="left:101px;top:214px;font-size:14px;line-height:23px;color:#217346;width:83px;text-align:center">B</div>
<div class="a" style="left:184px;top:214px;width:1px;height:23px;background:#b4b4b4;"></div>
<div id="col_C" class="t" style="left:184px;top:214px;font-size:14px;line-height:23px;color:#217346;width:121px;text-align:center">C</div>
<div class="a" style="left:305px;top:214px;width:1px;height:23px;background:#b4b4b4;"></div>
<div id="col_D" class="t" style="left:305px;top:214px;font-size:14px;line-height:23px;color:#217346;width:117px;text-align:center">D</div>
<div class="a" style="left:422px;top:214px;width:1px;height:23px;background:#b4b4b4;"></div>
<div id="col_E" class="t" style="left:422px;top:214px;font-size:14px;line-height:23px;color:#217346;width:69px;text-align:center">E</div>
<div class="a" style="left:491px;top:214px;width:1px;height:23px;background:#b4b4b4;"></div>
<div id="col_F" class="t" style="left:491px;top:214px;font-size:14px;line-height:23px;color:#217346;width:61px;text-align:center">F</div>
<div class="a" style="left:552px;top:214px;width:1px;height:23px;background:#b4b4b4;"></div>
<div id="col_G" class="t" style="left:552px;top:214px;font-size:14px;line-height:23px;color:#217346;width:72px;text-align:center">G</div>
<div class="a" style="left:624px;top:214px;width:1px;height:23px;background:#b4b4b4;"></div>
<div id="col_H" class="t" style="left:624px;top:214px;font-size:14px;line-height:23px;color:#217346;width:72px;text-align:center">H</div>
<div class="a" style="left:696px;top:214px;width:1px;height:23px;background:#b4b4b4;"></div>
<div id="col_I" class="t" style="left:696px;top:214px;font-size:14px;line-height:23px;color:#217346;width:72px;text-align:center">I</div>
<div class="a" style="left:768px;top:214px;width:1px;height:23px;background:#b4b4b4;"></div>
<div id="col_J" class="t" style="left:768px;top:214px;font-size:14px;line-height:23px;color:#217346;width:72px;text-align:center">J</div>
<div class="a" style="left:840px;top:214px;width:1px;height:23px;background:#b4b4b4;"></div>
<div id="col_K" class="t" style="left:840px;top:214px;font-size:14px;line-height:23px;color:#217346;width:72px;text-align:center">K</div>
<div class="a" style="left:912px;top:214px;width:1px;height:23px;background:#b4b4b4;"></div>
<div id="col_L" class="t" style="left:912px;top:214px;font-size:14px;line-height:23px;color:#217346;width:72px;text-align:center">L</div>
<div class="a" style="left:969px;top:214px;width:1px;height:23px;background:#b4b4b4;"></div>
<div class="a" style="left:29px;top:214px;width:1px;height:23px;background:#b4b4b4;"></div>
<div class="a" style="left:29px;top:237px;width:941px;height:2px;background:#217346;"></div>
<div class="a" style="left:1px;top:239px;width:28px;height:24px;background:#e6e6e6;"></div>
<div id="row_1" class="t" style="left:1px;top:239px;font-size:14px;line-height:25px;color:#444;width:28px;text-align:center">1</div>
<div class="a" style="left:1px;top:263px;width:28px;height:1px;background:#bdbdbd;"></div>
<div class="a" style="left:30px;top:263px;width:940px;height:1px;background:#d4d4d4;"></div>
<div class="a" style="left:1px;top:264px;width:28px;height:24px;background:#d3f0e0;"></div>
<div id="row_2" class="t" style="left:1px;top:264px;font-size:14px;line-height:25px;color:#217346;width:28px;text-align:center">2</div>
<div class="a" style="left:1px;top:288px;width:28px;height:1px;background:#bdbdbd;"></div>
<div class="a" style="left:30px;top:288px;width:940px;height:1px;background:#d4d4d4;"></div>
<div class="a" style="left:1px;top:289px;width:28px;height:24px;background:#d3f0e0;"></div>
<div id="row_3" class="t" style="left:1px;top:289px;font-size:14px;line-height:25px;color:#217346;width:28px;text-align:center">3</div>
<div class="a" style="left:1px;top:313px;width:28px;height:1px;background:#bdbdbd;"></div>
<div class="a" style="left:30px;top:313px;width:940px;height:1px;background:#d4d4d4;"></div>
<div class="a" style="left:1px;top:314px;width:28px;height:24px;background:#e6e6e6;"></div>
<div id="row_4" class="t" style="left:1px;top:314px;font-size:14px;line-height:25px;color:#444;width:28px;text-align:center">4</div>
<div class="a" style="left:1px;top:338px;width:28px;height:1px;background:#bdbdbd;"></div>
<div class="a" style="left:30px;top:338px;width:940px;height:1px;background:#d4d4d4;"></div>
<div class="a" style="left:1px;top:339px;width:28px;height:24px;background:#e6e6e6;"></div>
<div id="row_5" class="t" style="left:1px;top:339px;font-size:14px;line-height:25px;color:#444;width:28px;text-align:center">5</div>
<div class="a" style="left:1px;top:363px;width:28px;height:1px;background:#bdbdbd;"></div>
<div class="a" style="left:30px;top:363px;width:940px;height:1px;background:#d4d4d4;"></div>
<div class="a" style="left:1px;top:364px;width:28px;height:24px;background:#e6e6e6;"></div>
<div id="row_6" class="t" style="left:1px;top:364px;font-size:14px;line-height:25px;color:#444;width:28px;text-align:center">6</div>
<div class="a" style="left:1px;top:388px;width:28px;height:1px;background:#bdbdbd;"></div>
<div class="a" style="left:30px;top:388px;width:940px;height:1px;background:#d4d4d4;"></div>
<div class="a" style="left:1px;top:389px;width:28px;height:24px;background:#e6e6e6;"></div>
<div id="row_7" class="t" style="left:1px;top:389px;font-size:14px;line-height:25px;color:#444;width:28px;text-align:center">7</div>
<div class="a" style="left:1px;top:413px;width:28px;height:1px;background:#bdbdbd;"></div>
<div class="a" style="left:30px;top:413px;width:940px;height:1px;background:#d4d4d4;"></div>
<div class="a" style="left:1px;top:414px;width:28px;height:24px;background:#e6e6e6;"></div>
<div id="row_8" class="t" style="left:1px;top:414px;font-size:14px;line-height:25px;color:#444;width:28px;text-align:center">8</div>
<div class="a" style="left:1px;top:438px;width:28px;height:1px;background:#bdbdbd;"></div>
<div class="a" style="left:30px;top:438px;width:940px;height:1px;background:#d4d4d4;"></div>
<div class="a" style="left:1px;top:439px;width:28px;height:24px;background:#e6e6e6;"></div>
<div id="row_9" class="t" style="left:1px;top:439px;font-size:14px;line-height:25px;color:#444;width:28px;text-align:center">9</div>
<div class="a" style="left:1px;top:463px;width:28px;height:1px;background:#bdbdbd;"></div>
<div class="a" style="left:30px;top:463px;width:940px;height:1px;background:#d4d4d4;"></div>
<div class="a" style="left:1px;top:464px;width:28px;height:24px;background:#e6e6e6;"></div>
<div id="row_10" class="t" style="left:1px;top:464px;font-size:14px;line-height:25px;color:#444;width:28px;text-align:center">10</div>
<div class="a" style="left:1px;top:488px;width:28px;height:1px;background:#bdbdbd;"></div>
<div class="a" style="left:30px;top:488px;width:940px;height:1px;background:#d4d4d4;"></div>
<div class="a" style="left:1px;top:489px;width:28px;height:24px;background:#e6e6e6;"></div>
<div id="row_11" class="t" style="left:1px;top:489px;font-size:14px;line-height:25px;color:#444;width:28px;text-align:center">11</div>
<div class="a" style="left:1px;top:513px;width:28px;height:1px;background:#bdbdbd;"></div>
<div class="a" style="left:30px;top:513px;width:940px;height:1px;background:#d4d4d4;"></div>
<div class="a" style="left:1px;top:514px;width:28px;height:24px;background:#e6e6e6;"></div>
<div id="row_12" class="t" style="left:1px;top:514px;font-size:14px;line-height:25px;color:#444;width:28px;text-align:center">12</div>
<div class="a" style="left:1px;top:538px;width:28px;height:1px;background:#bdbdbd;"></div>
<div class="a" style="left:30px;top:538px;width:940px;height:1px;background:#d4d4d4;"></div>
<div class="a" style="left:1px;top:539px;width:28px;height:24px;background:#e6e6e6;"></div>
<div id="row_13" class="t" style="left:1px;top:539px;font-size:14px;line-height:25px;color:#444;width:28px;text-align:center">13</div>
<div class="a" style="left:1px;top:563px;width:28px;height:1px;background:#bdbdbd;"></div>
<div class="a" style="left:30px;top:563px;width:940px;height:1px;background:#d4d4d4;"></div>
<div class="a" style="left:1px;top:564px;width:28px;height:24px;background:#e6e6e6;"></div>
<div id="row_14" class="t" style="left:1px;top:564px;font-size:14px;line-height:25px;color:#444;width:28px;text-align:center">14</div>
<div class="a" style="left:1px;top:588px;width:28px;height:1px;background:#bdbdbd;"></div>
<div class="a" style="left:30px;top:588px;width:940px;height:1px;background:#d4d4d4;"></div>
<div class="a" style="left:1px;top:589px;width:28px;height:24px;background:#e6e6e6;"></div>
<div id="row_15" class="t" style="left:1px;top:589px;font-size:14px;line-height:25px;color:#444;width:28px;text-align:center">15</div>
<div class="a" style="left:1px;top:613px;width:28px;height:1px;background:#bdbdbd;"></div>
<div class="a" style="left:30px;top:613px;width:940px;height:1px;background:#d4d4d4;"></div>
<div class="a" style="left:1px;top:238px;width:28px;height:1px;background:#bdbdbd;"></div>
<div class="a" style="left:29px;top:238px;width:1px;height:373px;background:#bdbdbd;"></div>
<div class="a" style="left:101px;top:239px;width:1px;height:372px;background:#d4d4d4;"></div>
<div class="a" style="left:184px;top:239px;width:1px;height:372px;background:#d4d4d4;"></div>
<div class="a" style="left:305px;top:239px;width:1px;height:372px;background:#d4d4d4;"></div>
<div class="a" style="left:422px;top:239px;width:1px;height:372px;background:#d4d4d4;"></div>
<div class="a" style="left:491px;top:239px;width:1px;height:372px;background:#d4d4d4;"></div>
<div class="a" style="left:552px;top:239px;width:1px;height:372px;background:#d4d4d4;"></div>
<div class="a" style="left:624px;top:239px;width:1px;height:372px;background:#d4d4d4;"></div>
<div class="a" style="left:696px;top:239px;width:1px;height:372px;background:#d4d4d4;"></div>
<div class="a" style="left:768px;top:239px;width:1px;height:372px;background:#d4d4d4;"></div>
<div class="a" style="left:840px;top:239px;width:1px;height:372px;background:#d4d4d4;"></div>
<div class="a" style="left:912px;top:239px;width:1px;height:372px;background:#d4d4d4;"></div>
<div class="a" style="left:969px;top:239px;width:1px;height:372px;background:#d4d4d4;"></div>
<div class="a" style="left:31px;top:265px;width:939px;height:47px;background:#c6c6c6;"></div>
<div class="a" style="left:31px;top:265px;width:70px;height:22px;background:#fff;"></div>
<div class="a" style="left:101px;top:264px;width:1px;height:48px;background:#ababab;"></div>
<div class="a" style="left:184px;top:264px;width:1px;height:48px;background:#ababab;"></div>
<div class="a" style="left:305px;top:264px;width:1px;height:48px;background:#ababab;"></div>
<div class="a" style="left:422px;top:264px;width:1px;height:48px;background:#ababab;"></div>
<div class="a" style="left:491px;top:264px;width:1px;height:48px;background:#ababab;"></div>
<div class="a" style="left:552px;top:264px;width:1px;height:48px;background:#ababab;"></div>
<div class="a" style="left:624px;top:264px;width:1px;height:48px;background:#ababab;"></div>
<div class="a" style="left:696px;top:264px;width:1px;height:48px;background:#ababab;"></div>
<div class="a" style="left:768px;top:264px;width:1px;height:48px;background:#ababab;"></div>
<div class="a" style="left:840px;top:264px;width:1px;height:48px;background:#ababab;"></div>
<div class="a" style="left:912px;top:264px;width:1px;height:48px;background:#ababab;"></div>
<div class="a" style="left:969px;top:264px;width:1px;height:48px;background:#ababab;"></div>
<div class="a" style="left:31px;top:288px;width:939px;height:1px;background:#ababab;"></div>
<div class="a" style="left:28px;top:262px;width:942px;height:2px;background:#217346;"></div>
<div class="a" style="left:28px;top:313px;width:942px;height:2px;background:#217346;"></div>
<div class="a" style="left:28px;top:262px;width:2px;height:53px;background:#217346;"></div>
<div class="a" style="left:28px;top:310px;width:7px;height:6px;background:#fff;"></div>
<div class="a" style="left:29px;top:311px;width:5px;height:5px;background:#217346;"></div>
<div class="a" style="left:969px;top:214px;width:1px;height:397px;background:#bdbdbd;"></div>
<div id="c0_0" class="t" style="left:32px;top:242px;font-size:14.67px;line-height:18px;color:#2e2e2e;">利用月日</div>
<div id="c0_1" class="t" style="left:104px;top:242px;font-size:14.67px;line-height:18px;color:#2e2e2e;">乗車駅</div>
<div id="c0_2" class="t" style="left:187px;top:242px;font-size:14.67px;line-height:18px;color:#2e2e2e;">降車駅</div>
<div id="c0_3" class="t" style="left:308px;top:242px;font-size:14.67px;line-height:18px;color:#2e2e2e;">内　容</div>
<div id="c0_4" class="t" style="left:425px;top:242px;font-size:14.67px;line-height:18px;color:#2e2e2e;">利用額</div>
<div id="c0_5" class="t" style="left:494px;top:242px;font-size:14.67px;line-height:18px;color:#2e2e2e;">残額</div>
<div id="c1_0" class="t" style="left:29.25px;top:267px;font-size:14.67px;line-height:18px;color:#2e2e2e;transform:scaleX(0.9964);transform-origin:0 0;width:70px;text-align:right">5月25日</div>
<div id="c1_1" class="t" style="left:104px;top:267px;font-size:14.67px;line-height:18px;color:#2e2e2e;">品川</div>
<div id="c1_2" class="t" style="left:187px;top:267px;font-size:14.67px;line-height:18px;color:#2e2e2e;">浜松町</div>
<div id="c1_3" class="t" style="left:308px;top:267px;font-size:14.67px;line-height:18px;color:#2e2e2e;">鉄道利用</div>
<div id="c1_4" class="t" style="left:423px;top:267px;font-size:14.67px;line-height:18px;color:#2e2e2e;width:66px;text-align:right">-154</div>
<div id="c1_5" class="t" style="left:493px;top:267px;font-size:14.67px;line-height:18px;color:#2e2e2e;width:58px;text-align:right">6,078</div>
<div id="c2_0" class="t" style="left:29.25px;top:292px;font-size:14.67px;line-height:18px;color:#2e2e2e;transform:scaleX(0.9964);transform-origin:0 0;width:70px;text-align:right">5月25日</div>
<div id="c2_1" class="t" style="left:104px;top:292px;font-size:14.67px;line-height:18px;color:#2e2e2e;">都交大門</div>
<div id="c2_2" class="t" style="left:187px;top:292px;font-size:14.67px;line-height:18px;color:#2e2e2e;">都交都営六本木</div>
<div id="c2_3" class="t" style="left:308px;top:292px;font-size:14.67px;line-height:18px;color:#2e2e2e;">鉄道利用</div>
<div id="c2_4" class="t" style="left:423px;top:292px;font-size:14.67px;line-height:18px;color:#2e2e2e;width:66px;text-align:right">-170</div>
<div id="c2_5" class="t" style="left:493px;top:292px;font-size:14.67px;line-height:18px;color:#2e2e2e;width:58px;text-align:right">5,908</div>
<div id="c3_0" class="t" style="left:29.25px;top:317px;font-size:14.67px;line-height:18px;color:#2e2e2e;transform:scaleX(0.9964);transform-origin:0 0;width:70px;text-align:right">5月25日</div>
<div id="c3_1" class="t" style="left:104px;top:317px;font-size:14.67px;line-height:18px;color:#2e2e2e;">東メ六本木</div>
<div id="c3_2" class="t" style="left:187px;top:317px;font-size:14.67px;line-height:18px;color:#2e2e2e;">東メ恵比寿</div>
<div id="c3_3" class="t" style="left:308px;top:317px;font-size:14.67px;line-height:18px;color:#2e2e2e;">鉄道利用</div>
<div id="c3_4" class="t" style="left:423px;top:317px;font-size:14.67px;line-height:18px;color:#2e2e2e;width:66px;text-align:right">-165</div>
<div id="c3_5" class="t" style="left:493px;top:317px;font-size:14.67px;line-height:18px;color:#2e2e2e;width:58px;text-align:right">5,743</div>
<div id="c4_0" class="t" style="left:29.25px;top:342px;font-size:14.67px;line-height:18px;color:#2e2e2e;transform:scaleX(0.9964);transform-origin:0 0;width:70px;text-align:right">5月25日</div>
<div id="c4_1" class="t" style="left:104px;top:342px;font-size:14.67px;line-height:18px;color:#2e2e2e;">恵比寿</div>
<div id="c4_2" class="t" style="left:187px;top:342px;font-size:14.67px;line-height:18px;color:#2e2e2e;">品川</div>
<div id="c4_3" class="t" style="left:308px;top:342px;font-size:14.67px;line-height:18px;color:#2e2e2e;">鉄道利用</div>
<div id="c4_4" class="t" style="left:423px;top:342px;font-size:14.67px;line-height:18px;color:#2e2e2e;width:66px;text-align:right">-154</div>
<div id="c4_5" class="t" style="left:493px;top:342px;font-size:14.67px;line-height:18px;color:#2e2e2e;width:58px;text-align:right">5,589</div>
<div id="c5_0" class="t" style="left:29.25px;top:367px;font-size:14.67px;line-height:18px;color:#2e2e2e;transform:scaleX(0.9964);transform-origin:0 0;width:70px;text-align:right">5月26日</div>
<div class="a" style="left:970px;top:214px;width:21px;height:397px;background:#e6e6e6;"></div>
<div class="a" style="left:973px;top:216px;width:15px;height:15px;background:#fff;border:1px solid #c6c6c6"></div>
<svg class="a" style="left:977px;top:221px" width="8" height="5" viewBox="0 0 8 5"><path d="M0 4.5h8L4 0.5z" fill="#777"/></svg>
<div class="a" style="left:973px;top:232px;width:15px;height:254px;background:#fff;border:1px solid #ababab"></div>
<div class="a" style="left:973px;top:486px;width:15px;height:108px;background:#d8d8d8;"></div>
<div class="a" style="left:973px;top:595px;width:15px;height:15px;background:#fff;border:1px solid #c6c6c6"></div>
<svg class="a" style="left:977px;top:600px" width="8" height="5" viewBox="0 0 8 5"><path d="M0 0.5h8L4 4.5z" fill="#777"/></svg>
<div class="a" style="left:1px;top:610px;width:990px;height:29px;background:#e6e6e6;border-top:1px solid #c6c6c6;border-bottom:1px solid #c6c6c6"></div>
<svg class="a" style="left:28px;top:620px" width="5" height="8" viewBox="0 0 5 8"><path d="M5 0v8L0 4z" fill="#c0c0c0"/></svg>
<svg class="a" style="left:57px;top:620px" width="5" height="8" viewBox="0 0 5 8"><path d="M0 0v8L5 4z" fill="#c0c0c0"/></svg>
<div class="a" style="left:101px;top:610px;width:73px;height:25px;background:#fff;border-left:1px solid #c6c6c6;border-right:1px solid #c6c6c6"></div>
<div class="a" style="left:101px;top:633px;width:74px;height:2px;background:#217346;"></div>
<div id="sheet1" class="t" style="left:100.25px;top:615px;font-size:14px;line-height:18px;color:#217346;transform:scaleX(1.0096);transform-origin:0 0;width:73px;text-align:center">Sheet1</div>
<svg class="a" style="left:206px;top:615px" width="18" height="18" viewBox="0 0 18 18"><g fill="none" stroke="#666" stroke-width="1.1"><circle cx="9" cy="9" r="7.5"/><path d="M9 4.8v8.4M4.8 9h8.4" stroke-width="1.7"/></g></svg>
<div class="a" style="left:594px;top:619px;width:2px;height:2px;background:#aaa;"></div>
<div class="a" style="left:594px;top:623px;width:2px;height:2px;background:#aaa;"></div>
<div class="a" style="left:594px;top:627px;width:2px;height:2px;background:#aaa;"></div>
<div class="a" style="left:612px;top:617px;width:15px;height:15px;background:#fff;border:1px solid #c6c6c6"></div>
<svg class="a" style="left:617px;top:621px" width="5" height="7" viewBox="0 0 5 7"><path d="M4.5 0v7L0.5 3.5z" fill="#666"/></svg>
<div class="a" style="left:627px;top:617px;width:298px;height:15px;background:#fff;border:1px solid #ababab"></div>
<div class="a" style="left:925px;top:617px;width:30px;height:15px;background:#d8d8d8;"></div>
<div class="a" style="left:955px;top:617px;width:15px;height:15px;background:#fff;border:1px solid #c6c6c6"></div>
<svg class="a" style="left:960px;top:621px" width="5" height="7" viewBox="0 0 5 7"><path d="M0.5 0v7L4.5 3.5z" fill="#666"/></svg>
<div class="a" style="left:1px;top:639px;width:990px;height:21px;background:#f3f2f1;"></div>
<div id="ready" class="t" style="left:8.78px;top:642px;font-size:12px;line-height:15px;color:#444;transform:scaleX(1.0397);transform-origin:0 0;">準備完了</div>
<svg class="a" style="left:76px;top:643px" width="15" height="13" viewBox="0 0 15 13"><g fill="none" stroke="#333" stroke-width="1.1"><path d="M5.5 11.5H0.5V0.5h13V4.5"/><path d="M0.5 2.5h13M2.5 5h3M2.5 7h3M2.5 9h3"/></g><circle cx="9.6" cy="8.3" r="3.7" fill="#f3f2f1" stroke="#333" stroke-width="1.2"/><circle cx="9.6" cy="8.3" r="1.7" fill="#333"/></svg>
<div id="avg" class="t" style="left:381.94px;top:642px;font-size:12px;line-height:15px;color:#444;transform:scaleX(1.0667);transform-origin:0 0;">平均: 6月14日</div>
<div id="cnt" class="t" style="left:474.47px;top:642px;font-size:12px;line-height:15px;color:#444;transform:scaleX(0.9341);transform-origin:0 0;">データの個数: 12</div>
<div id="sum" class="t" style="left:575.51px;top:642px;font-size:12px;line-height:15px;color:#444;transform:scaleX(1.0835);transform-origin:0 0;">合計: 9月22日</div>
<div class="a" style="left:674px;top:639px;width:40px;height:20px;background:#c8c6c4;"></div>
<svg class="a" style="left:687px;top:642px" width="13" height="13" viewBox="0 0 13 13"><rect x="0" y="0" width="13" height="13" rx="1" fill="#333"/><rect x="1.5" y="1.5" width="2.5" height="2.5" fill="#d0d0d0"/><rect x="1.5" y="5.0" width="2.5" height="2.5" fill="#d0d0d0"/><rect x="1.5" y="8.5" width="2.5" height="2.5" fill="#d0d0d0"/><rect x="5.0" y="1.5" width="2.5" height="2.5" fill="#d0d0d0"/><rect x="5.0" y="5.0" width="2.5" height="2.5" fill="#d0d0d0"/><rect x="5.0" y="8.5" width="2.5" height="2.5" fill="#d0d0d0"/><rect x="8.5" y="1.5" width="2.5" height="2.5" fill="#d0d0d0"/><rect x="8.5" y="5.0" width="2.5" height="2.5" fill="#d0d0d0"/><rect x="8.5" y="8.5" width="2.5" height="2.5" fill="#d0d0d0"/></svg>
<svg class="a" style="left:727px;top:642px" width="14" height="13" viewBox="0 0 14 13"><g fill="none" stroke="#333" stroke-width="1.1"><path d="M0.5 0.5h13v12h-13z"/><path d="M3.5 2.5h7v8h-7zM5 4.5h4M5 6.5h4M5 8.5h4"/></g></svg>
<svg class="a" style="left:767px;top:642px" width="14" height="13" viewBox="0 0 14 13"><g fill="none" stroke="#333" stroke-width="1.1"><path d="M0.5 0.5h13v12h-13z"/><path d="M3.5 0.5v7h6.5v-7M6.8 0.5v7M3.5 7.5H0.5"/></g></svg>
<div class="a" style="left:800px;top:648px;width:9px;height:1px;background:#444;"></div>
<div class="a" style="left:813px;top:648px;width:100px;height:1px;background:#aaa;"></div>
<div class="a" style="left:861px;top:643px;width:5px;height:11px;background:#777;"></div>
<div class="a" style="left:917px;top:648px;width:9px;height:1px;background:#444;"></div>
<div class="a" style="left:921px;top:644px;width:1px;height:9px;background:#444;"></div>
<div id="zoom" class="t" style="left:938.98px;top:642px;font-size:12.5px;line-height:16px;color:#444;transform:scaleX(1.0328);transform-origin:0 0;">100%</div>
<div class="a" style="left:0px;top:35px;width:1px;height:626px;background:#217346;z-index:50"></div>
<div class="a" style="left:991px;top:35px;width:1px;height:626px;background:#217346;z-index:50"></div>
<div class="a" style="left:0px;top:660px;width:992px;height:1px;background:#217346;z-index:50"></div>
</body></html>
